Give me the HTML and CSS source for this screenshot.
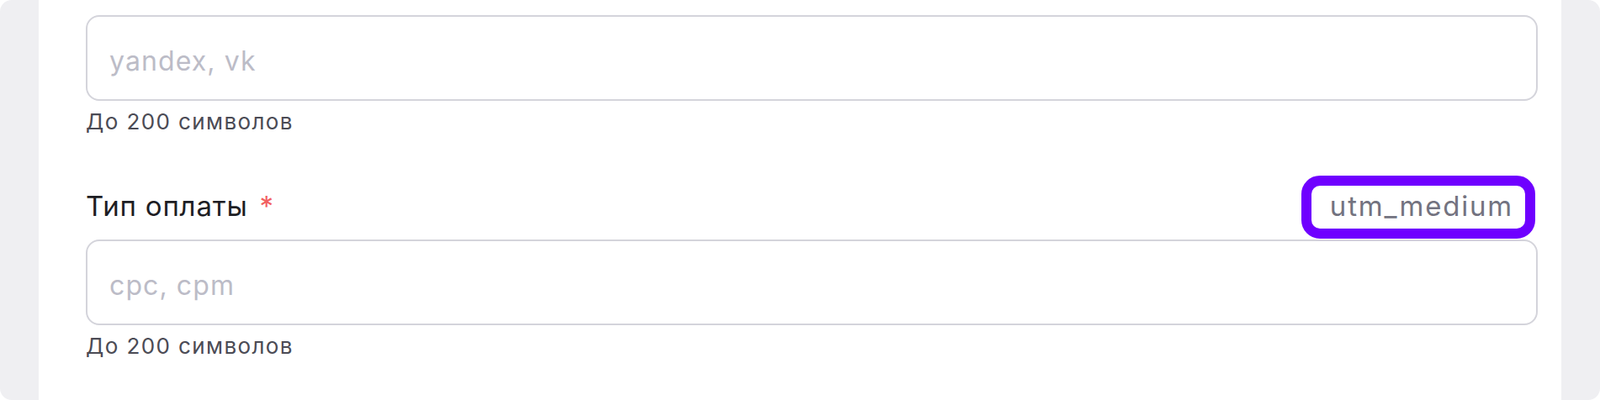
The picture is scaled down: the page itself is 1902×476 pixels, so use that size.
FILE: index.html
```html
<!DOCTYPE html>
<html lang="ru">
<head>
<meta charset="utf-8">
<title>Форма</title>
<link rel="stylesheet" href="styles.css">
</head>
<body>
<div class="frame">
  <div class="panel">
    <div class="field">
      <input class="input" type="text" placeholder="yandex, vk">
      <div class="hint">До 200 символов</div>
    </div>
    <div class="field field-second">
      <div class="label-row">
        <label class="label">Тип оплаты<span class="req">*</span></label>
        <span class="utm">utm_medium</span>
      </div>
      <input class="input" type="text" placeholder="cpc, cpm">
      <div class="hint">До 200 символов</div>
    </div>
  </div>
</div>
</body>
</html>
```

FILE: styles.css
```css
html, body {
  margin: 0;
  height: 100%;
}
body {
  background: #ffffff;
  font-family: Inter, "Noto Sans", sans-serif;
}
.frame {
  height: 476px;
  box-sizing: border-box;
  background: #efeff2;
  border-radius: 14px;
  padding: 0 46px;
  overflow: hidden;
}
.panel {
  height: 100%;
  box-sizing: border-box;
  background: #ffffff;
  padding: 18px 28px 0 56px;
}
.input {
  display: block;
  width: 100%;
  height: 102px;
  box-sizing: border-box;
  margin: 0;
  padding: 6px 26px 0;
  border: 2px solid #d4d4db;
  border-radius: 16px;
  background: #ffffff;
  font-family: Inter, "Noto Sans", sans-serif;
  font-size: 32px;
  letter-spacing: 1.1px;
  color: #222226;
  outline: none;
}
.input::placeholder {
  color: #bcbcc7;
  opacity: 1;
}
.hint {
  margin-top: 7px;
  font-size: 26px;
  line-height: 36px;
  letter-spacing: 1.4px;
  color: #4b4b55;
}
.field-second {
  margin-top: 46px;
}
.label-row {
  display: flex;
  justify-content: space-between;
  align-items: baseline;
  margin-bottom: 1px;
}
.label {
  font-size: 33px;
  line-height: 44px;
  letter-spacing: 0.8px;
  color: #1e1e24;
}
.req {
  margin-left: 14px;
  color: #f25f5f;
}
.utm {
  margin-right: 3px;
  padding: 0 14px 3px 22px;
  border: 12px solid #6f00ff;
  border-radius: 22px;
  font-size: 33px;
  line-height: 48px;
  letter-spacing: 1.8px;
  color: #737380;
}
```
